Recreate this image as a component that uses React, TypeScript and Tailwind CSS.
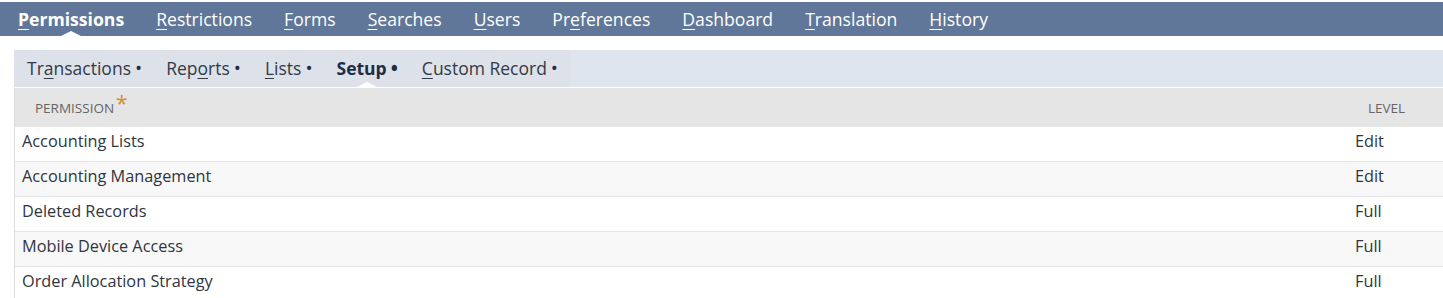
import React from 'react';

const mainTabs = [
  { pre: '', key: 'P', post: 'ermissions', active: true },
  { pre: '', key: 'R', post: 'estrictions' },
  { pre: '', key: 'F', post: 'orms' },
  { pre: '', key: 'S', post: 'earches' },
  { pre: '', key: 'U', post: 'sers' },
  { pre: 'Pr', key: 'e', post: 'ferences' },
  { pre: '', key: 'D', post: 'ashboard' },
  { pre: '', key: 'T', post: 'ranslation' },
  { pre: '', key: 'H', post: 'istory' },
];

const subTabs = [
  { pre: 'Tr', key: 'a', post: 'nsactions' },
  { pre: 'Rep', key: 'o', post: 'rts' },
  { pre: '', key: 'L', post: 'ists' },
  { pre: 'Setup', key: '', post: '', active: true },
  { pre: '', key: 'C', post: 'ustom Record' },
];

const rows = [
  { name: 'Accounting Lists', level: 'Edit' },
  { name: 'Accounting Management', level: 'Edit' },
  { name: 'Deleted Records', level: 'Full' },
  { name: 'Mobile Device Access', level: 'Full' },
  { name: 'Order Allocation Strategy', level: 'Full' },
];

const Caret = () => (
  <span className="absolute left-1/2 bottom-0 -translate-x-1/2 w-0 h-0 border-x-[10px] border-x-transparent border-b-[5px] border-b-white" />
);

export default function App() {
  return (
    <div className="w-[1443px] h-[298px] bg-white overflow-hidden font-['Open_Sans',sans-serif]">
      {/* main tab bar */}
      <div className="mt-[2px] h-[34px] bg-[#607799] flex items-stretch pl-[2px]">
        {mainTabs.map((t, i) => (
          <div
            key={i}
            className={`relative flex items-center px-[16px] text-[17.6px] text-white ${t.active ? 'font-bold' : ''}`}
          >
            {t.pre}
            <span className="underline underline-offset-[3px] decoration-1">{t.key}</span>
            {t.post}
            {t.active && <Caret />}
          </div>
        ))}
      </div>

      <div className="ml-[14px] mt-[14px]">
        {/* sub tab bar */}
        <div className="h-[37px] bg-[#dfe5ef] flex">
          <div className="flex items-stretch bg-[#dde1e9] pl-[1px]">
            {subTabs.map((t, i) => (
              <div
                key={i}
                className={`relative flex items-center pl-[12px] pr-[12px] text-[17.5px] ${t.active ? 'font-bold text-[#1f2d45]' : 'text-[#333a45]'}`}
              >
                {t.pre}
                {t.key && <span className="underline underline-offset-[3px] decoration-1">{t.key}</span>}
                {t.post}
                <span className="ml-[4px] text-[19px] leading-none text-[#1f2d45]">•</span>
                {t.active && <Caret />}
              </div>
            ))}
          </div>
        </div>

        {/* table */}
        <div className="border-t border-white border-l border-l-[#dcdcdc]">
          <div className="grid grid-cols-[1fr_95px] h-[39px] bg-[#e5e5e5] items-center text-[13.5px] text-[#666] uppercase pt-[2px]">
            <div className="pl-[20px] flex items-start">
              Permission
              <span className="ml-[2px] -mt-[5px] text-[21px] leading-[21px] text-[#e08a1e]">*</span>
            </div>
            <div className="pl-[20px]">Level</div>
          </div>
          {rows.map((r, i) => (
            <div
              key={i}
              className={`grid grid-cols-[1fr_95px] h-[35px] border-b border-[#e5e5e5] pt-[2px] text-[16.3px] leading-[24px] text-[#2f3540] ${i % 2 === 1 ? 'bg-[#f8f8f8]' : 'bg-white'}`}
            >
              <div className="pl-[7px]">{r.name}</div>
              <div className="pl-[7px]">{r.level}</div>
            </div>
          ))}
        </div>
      </div>
    </div>
  );
}
